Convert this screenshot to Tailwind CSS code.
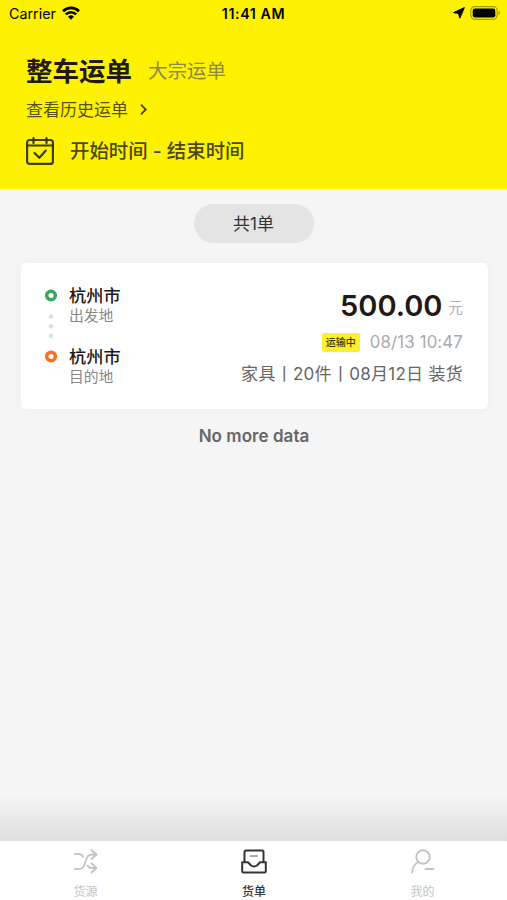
<!DOCTYPE html>
<html lang="zh-CN">
<head>
  <meta charset="UTF-8">
  <meta name="viewport" content="width=device-width, initial-scale=1.0">
  <title>整车运单</title>
  <script src="https://cdn.jsdelivr.net/npm/@tailwindcss/browser@4"></script>
</head>
<body class="bg-[#f5f5f5] font-['Inter','Noto_Sans_CJK_SC',sans-serif]">
  <div class="flex flex-col w-full h-screen overflow-hidden">
    <!-- Header -->
    <header class="h-[189px] shrink-0 bg-[#fff200]">
      <!-- Status bar -->
      <div class="grid grid-cols-3 items-center h-[27px] px-[9px] text-black">
        <div class="flex items-center gap-[6px]">
          <span class="text-[14.3px] leading-7">Carrier</span>
          <svg class="w-[18px] h-[14px] -mt-[2px]" viewBox="0 0 18 14" fill="none" stroke="#000" stroke-width="2.7">
            <path d="M1 5.2a11.5 11.5 0 0 1 16 0"/>
            <path d="M3.8 8.4a7.4 7.4 0 0 1 10.4 0"/>
            <path d="M9 13.8L6 10.8a4.3 4.3 0 0 1 6 0z" fill="#000" stroke="none"/>
          </svg>
        </div>
        <span class="text-center text-[14.2px] leading-7 font-semibold tracking-[0.6px] whitespace-nowrap">11:41 AM</span>
        <div class="flex items-center justify-end gap-[5px] -mr-[3px] -mt-[2px]">
          <svg class="w-3 h-3" viewBox="0 0 12 12"><path d="M11.4.6L6.800 11.200 5.600 6.500.6 5.600z" fill="#000" stroke="#000" stroke-linejoin="round"/></svg>
          <svg class="w-[31px] h-[14px]" viewBox="0 0 31 14">
            <rect x=".8" y=".7" width="26.4" height="12.6" rx="4" fill="none" stroke="#a39b00" stroke-width="1.2"/>
            <rect x="2.7" y="2.6" width="22.6" height="8.8" rx="2.2" fill="#000"/>
            <path d="M28.5 4.8c2 .8 2 3.6 0 4.4z" fill="#a39b00"/>
          </svg>
        </div>
      </div>
      <div class="px-[26px] pt-[23px]">
        <div class="flex items-center gap-4">
          <h1 class="text-[26.5px] leading-[40px] font-bold text-[#221a10]">整车运单</h1>
          <span class="pt-px text-[19.5px] leading-[40px] text-[#8d8843]">大宗运单</span>
        </div>
        <a href="#" class="flex items-center gap-3 mt-[6px] text-[17px] leading-6 text-[#55501a]">
          <span class="pt-px">查看历史运单</span>
          <svg class="w-[7px] h-[11px]" viewBox="0 0 7 11" fill="none" stroke="#443f10" stroke-width="1.8"><path d="M1 .7l4.8 4.8L1 10.300"/></svg>
        </a>
        <div class="flex items-center gap-4 mt-[15px]">
          <svg class="w-7 h-7" viewBox="0 0 28 28" fill="none" stroke="#3f3b12" stroke-width="2.2" stroke-linecap="round" stroke-linejoin="round">
            <rect x="1.1" y="3" width="25.8" height="23.900" rx="2.500"/>
            <path d="M1 8.500h26M7.500 1.100v5M20.500 1.100v5M8.500 16l4.800 4.800 6.500-7.200"/>
          </svg>
          <span class="text-[19.4px] leading-7 font-medium text-[#4c481c] whitespace-nowrap">开始时间 - 结束时间</span>
        </div>
      </div>
    </header>

    <!-- Order list -->
    <main class="flex-1 flex flex-col items-center px-5 pt-[15px]">
      <div class="w-[120px] h-[39px] rounded-full bg-[#e4e4e4] text-center text-[17px] leading-[40px] text-[#333]">共1单</div>

      <section class="flex justify-between w-[467px] h-[146px] mt-5 ml-[2px] pl-6 pr-[25px] rounded-[5px] bg-white shadow-[0_0_12px_rgba(0,0,0,0.03)]">
        <div class="flex gap-3">
          <svg class="w-3 h-[77px] mt-[26px]" viewBox="0 0 12 77" fill="none">
            <circle cx="6" cy="6.500" r="4.300" stroke="#3ea55c" stroke-width="3.500"/>
            <g fill="#dedede">
              <circle cx="6" cy="27.500" r="2.300"/>
              <circle cx="6" cy="37.200" r="2.300"/>
              <circle cx="6" cy="47" r="2.300"/>
            </g>
            <circle cx="6" cy="67.500" r="4.300" stroke="#fb6f1c" stroke-width="3.500"/>
          </svg>
          <div class="pt-[22px]">
            <div class="h-[61px]">
              <p class="text-[17.2px] leading-[22px] font-medium text-[#231815]">杭州市</p>
              <p class="text-[14.800px] leading-[18px] text-[#888]">出发地</p>
            </div>
            <div>
              <p class="text-[17.2px] leading-[22px] font-medium text-[#231815]">杭州市</p>
              <p class="text-[14.800px] leading-[18px] text-[#888]">目的地</p>
            </div>
          </div>
        </div>
        <div class="flex flex-col items-end pt-[25px] whitespace-nowrap">
          <p class="flex items-baseline gap-[6px] h-9 leading-9">
            <span class="text-[29px] font-semibold text-[#231815]">500.00</span>
            <span class="relative -top-[3px] text-[14.500px] text-[#b0b0b0]">元</span>
          </p>
          <p class="flex items-center gap-[10px] mt-[7px] h-[22px]">
            <span class="w-[38px] h-[19px] rounded-[2px] bg-[#fdf02d] text-center text-[10px] leading-[19px] font-medium text-[#3a3510]">运输中</span>
            <span class="pt-[2px] text-[16.800px] tracking-[0.15px] text-[#aaa]">08/13 10:47</span>
          </p>
          <p class="mt-[9px] text-[17px] leading-6 tracking-[0.28px] text-[#666]">家具丨20件丨08月12日 装货</p>
        </div>
      </section>

      <p class="mt-[15px] ml-px text-[17px] leading-6 font-semibold tracking-[0.05px] text-[#666]">No more data</p>
    </main>

    <!-- Tab bar -->
    <div class="h-[45px] shrink-0 bg-linear-to-b from-[#f5f5f5] to-[#dedede]"></div>
    <nav class="grid grid-cols-3 h-[59px] shrink-0 bg-white text-[12px] leading-4 text-[#c4c4c4]">
      <a href="#" class="flex flex-col items-center pl-[2px] pt-[8px] gap-[10px]">
        <svg class="w-6 h-[25px] shrink-0" viewBox="0 0 24 25" fill="none" stroke="currentColor" stroke-width="1.900" stroke-linecap="round" stroke-linejoin="round">
          <path d="M1 5h3.500c2.200 0 3.500 1 4.500 2.700M1 20h4c9 0 4-14.500 13-14.500h4M17.500 1L22.500 5.500 17.500 10M13.500 16.500c1 1.800 2.300 2.500 4.500 2.500h4M17.500 14.500L22.500 19 17.500 23.500"/>
        </svg>
        货源
      </a>
      <a href="#" class="flex flex-col items-center pl-px pt-[8px] gap-[10px] text-[#333]">
        <svg class="w-[26px] h-[25px] shrink-0" viewBox="0 0 26 25" fill="none" stroke="currentColor" stroke-width="2" stroke-linejoin="round">
          <path d="M3.500 13V3a1.500 1.500 0 0 1 1.500-1.500h16A1.500 1.500 0 0 1 22.500 3v10"/>
          <path d="M1.200 13.300h5.800l3 3.200c2 1.300 4 1.300 6 0l3-3.200h5.800V22a1.500 1.500 0 0 1-1.500 1.500H2.700A1.500 1.500 0 0 1 1.200 22z"/>
          <path d="M9 7h8" stroke="#aaa"/>
        </svg>
        <span class="font-medium">货单</span>
      </a>
      <a href="#" class="flex flex-col items-center pt-[8px] gap-[10px]">
        <svg class="w-6 h-[25px] shrink-0" viewBox="0 0 24 25" fill="none" stroke="currentColor" stroke-width="1.900" stroke-linecap="round">
          <circle cx="12" cy="8" r="6.700"/>
          <path d="M7.500 13c-4 2-6 5.500-6.500 10.500M14.500 20h8"/>
        </svg>
        我的
      </a>
    </nav>
  </div>
</body>
</html>
